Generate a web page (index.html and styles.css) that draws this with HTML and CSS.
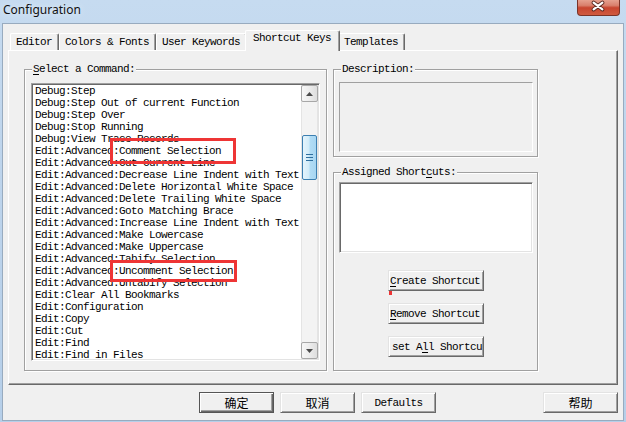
FILE: index.html
```html
<!DOCTYPE html>
<html lang="en">
<head>
  <meta charset="UTF-8">
  <title>Configuration</title>
  <link rel="stylesheet" href="styles.css">
</head>
<body>

  <div class="window">
    <div class="titlebar">
      <span class="title">Configuration</span>
      <div class="close">
        <svg width="43" height="17" viewBox="0 0 43 17">
          <path d="M17 4.5 L26 11.5 M26 4.5 L17 11.5" stroke="#5a2a22" stroke-width="4" stroke-linecap="round"/>
          <path d="M17 4.5 L26 11.5 M26 4.5 L17 11.5" stroke="#fff" stroke-width="2.2" stroke-linecap="round"/>
        </svg>
      </div>
    </div>

    <div class="client">
      <div class="tabs">
        <div class="tab">Editor</div>
        <div class="tab">Colors &amp; Fonts</div>
        <div class="tab">User Keywords</div>
        <div class="tab active">Shortcut Keys</div>
        <div class="tab">Templates</div>
      </div>

      <div class="panel">
        <div class="group cmd">
          <span class="group-title"><u>S</u>elect a Command:</span>
          <div class="listbox">
            <ul class="list">
              <li>Debug:Step</li>
              <li>Debug:Step Out of current Function</li>
              <li>Debug:Step Over</li>
              <li>Debug:Stop Running</li>
              <li>Debug:View Trace Records</li>
              <li>Edit:Advanced:Comment Selection</li>
              <li>Edit:Advanced:Cut Current Line</li>
              <li>Edit:Advanced:Decrease Line Indent with Text</li>
              <li>Edit:Advanced:Delete Horizontal White Space</li>
              <li>Edit:Advanced:Delete Trailing White Space</li>
              <li>Edit:Advanced:Goto Matching Brace</li>
              <li>Edit:Advanced:Increase Line Indent with Text</li>
              <li>Edit:Advanced:Make Lowercase</li>
              <li>Edit:Advanced:Make Uppercase</li>
              <li>Edit:Advanced:Tabify Selection</li>
              <li>Edit:Advanced:Uncomment Selection</li>
              <li>Edit:Advanced:Untabify Selection</li>
              <li>Edit:Clear All Bookmarks</li>
              <li>Edit:Configuration</li>
              <li>Edit:Copy</li>
              <li>Edit:Cut</li>
              <li>Edit:Find</li>
              <li>Edit:Find in Files</li>
            </ul>
            <div class="scrollbar">
              <div class="sb-btn">
                <svg width="7" height="4" viewBox="0 0 7 4"><path d="M0 4 L3.5 0 L7 4 Z" fill="#4a4a4a"/></svg>
              </div>
              <div class="track">
                <div class="thumb">
                  <svg width="7" height="7" viewBox="0 0 7 7">
                    <path d="M0 0.5 H7 M0 3.5 H7 M0 6.5 H7" stroke="#2f6f9f" stroke-width="1"/>
                  </svg>
                </div>
              </div>
              <div class="sb-btn">
                <svg width="7" height="4" viewBox="0 0 7 4"><path d="M0 0 L3.5 4 L7 0 Z" fill="#4a4a4a"/></svg>
              </div>
            </div>
          </div>
        </div>

        <div class="side">
          <div class="group desc">
            <span class="group-title">Description:</span>
            <div class="field"></div>
          </div>
          <div class="group keys">
            <span class="group-title">Assigned Short<u>c</u>uts:</span>
            <div class="field white"></div>
            <div class="key-buttons">
              <button class="btn wide"><u>C</u>reate Shortcut</button>
              <button class="btn wide"><u>R</u>emove Shortcut</button>
              <button class="btn wide clip">set A<u>l</u>l Shortcu</button>
            </div>
          </div>
        </div>
      </div>

      <div class="actions">
        <button class="btn dlg default zh">确定</button>
        <button class="btn dlg zh">取消</button>
        <button class="btn dlg">Defaults</button>
        <button class="btn dlg help zh">帮助</button>
      </div>
    </div>

    <!-- annotation marks drawn over the dialog -->
    <div class="mark mark-1"></div>
    <div class="mark mark-2"></div>
    <div class="mark dot"></div>
  </div>

</body>
</html>
```

FILE: styles.css
```css
body {
  margin: 0;
  font-family: "Liberation Mono", monospace;
  font-size: 11px;
  letter-spacing: -0.6px;
  color: #000;
}

.window {
  position: relative;
  width: 626px;
  height: 422px;
  overflow: hidden;
  background: linear-gradient(180deg, #c6dbf0 0%, #bdd4ec 40%, #b6cfe9 100%);
}

.titlebar {
  height: 23px;
  display: flex;
  justify-content: space-between;
  align-items: flex-start;
  padding-right: 6px;
}

.title {
  padding: 2px 0 0 3px;
  font: 12px/16px "Noto Sans", sans-serif;
  letter-spacing: 0;
  color: #111;
  text-shadow: 0 0 6px #eaf3fc;
}

.close {
  width: 43px;
  height: 17px;
  box-sizing: border-box;
  margin-top: -1px;
  border: 1px solid #7a3328;
  border-top: 0;
  border-radius: 0 0 4px 4px;
  background: linear-gradient(180deg, #e8a695 0%, #d9806d 40%, #c8452f 55%, #cf5a40 100%);
  display: flex;
}

.close svg {
  margin: -1px 0 0 -1px;
}

.client {
  height: 398px;
  margin: 0 2px;
  box-sizing: border-box;
  border: 1px solid #98abbf;
  background: #f0f0f0;
  padding: 7px 0 0 5px;
}

/* tabs */
.tabs {
  display: flex;
  align-items: flex-end;
  height: 19px;
  padding-left: 2px;
}

.tab {
  height: 17px;
  box-sizing: border-box;
  padding: 0 6px 0 5px;
  border: 1px solid;
  border-bottom: 0;
  border-color: #fff #696969 #fff #fff;
  border-radius: 2px 2px 0 0;
  box-shadow: inset -1px 0 #a0a0a0;
  background: #f0f0f0;
  line-height: 16px;
  white-space: nowrap;
}

.tab.active {
  position: relative;
  z-index: 1;
  height: 21px;
  margin: 0 -2px -1px;
  padding: 0 8px 0 7px;
  line-height: 15px;
}

.panel {
  width: 610px;
  height: 335px;
  box-sizing: border-box;
  border: 1px solid;
  border-color: #fff #696969 #696969 #fff;
  box-shadow: inset -1px -1px #a0a0a0;
  display: flex;
  gap: 6px;
  padding: 18px 0 0 15px;
}

/* group boxes */
.group {
  box-sizing: border-box;
  border: 1px solid #a0a0a0;
  box-shadow: 1px 1px #fff, inset 1px 1px #fff;
}

.group-title {
  display: block;
  width: fit-content;
  margin: -7px 0 0 7px;
  padding: 0 1px;
  background: #f0f0f0;
  line-height: 12px;
  white-space: nowrap;
}

.group-title u,
.btn u {
  text-underline-offset: 2px;
}

.cmd {
  width: 303px;
  height: 302px;
}

.listbox {
  width: 289px;
  height: 278px;
  margin: 8px 0 0 6px;
  box-sizing: border-box;
  border: 1px solid;
  border-color: #a0a0a0 #fff #fff #a0a0a0;
  padding: 1px;
  box-shadow: inset 1px 1px #696969, inset -1px -1px #e3e3e3;
  background: #fff;
  display: flex;
}

.list {
  flex: 1;
  margin: 0;
  padding: 0 0 0 2px;
  list-style: none;
  overflow: clip;
  overflow-clip-margin: 3px;
  line-height: 12px;
  white-space: nowrap;
}

.scrollbar {
  position: relative;
  width: 17px;
  display: flex;
  flex-direction: column;
  background: linear-gradient(90deg, #e4e4e4 0 1px, #f3f3f3 1px 16px, #e4e4e4 16px);
}

.sb-btn {
  height: 17px;
  box-sizing: border-box;
  border: 1px solid #a7a7a7;
  border-radius: 2px;
  background: linear-gradient(90deg, #f7f7f7, #ececec 50%, #dedede);
  display: flex;
  align-items: center;
  justify-content: center;
}

.track {
  flex: 1;
}

.thumb {
  margin: 33px 0 0 1px;
  width: 15px;
  height: 45px;
  box-sizing: border-box;
  border: 1px solid #3c7fb1;
  border-radius: 2px;
  background: linear-gradient(90deg, #e5f4fc 0%, #d2ecf9 45%, #b1dcf5 55%, #a7d6f2 100%);
  display: flex;
  align-items: center;
  justify-content: center;
}

/* right column */
.side {
  width: 205px;
  display: flex;
  flex-direction: column;
}

.desc {
  height: 88px;
}

.keys {
  height: 199px;
  margin-top: 15px;
}

.field {
  width: 194px;
  height: 70px;
  margin: 7px 0 0 5px;
  box-sizing: border-box;
  border: 1px solid;
  border-color: #a0a0a0 #fff #fff #a0a0a0;
}

.field.white {
  height: 71px;
  margin-top: 4px;
  background: #fff;
  box-shadow: inset 1px 1px #696969, inset -1px -1px #e3e3e3;
}

.key-buttons {
  display: flex;
  flex-direction: column;
  gap: 12px;
  margin-top: 17px;
  padding-left: 54px;
}

/* buttons */
.btn {
  height: 21px;
  box-sizing: border-box;
  padding: 0;
  border: 1px solid;
  border-color: #e3e3e3 #696969 #696969 #e3e3e3;
  box-shadow: inset 1px 1px #fff, inset -1px -1px #a0a0a0;
  background: #f0f0f0;
  font: inherit;
  letter-spacing: inherit;
  color: #000;
  line-height: 18px;
  white-space: nowrap;
  overflow: hidden;
}

.btn.wide {
  width: 96px;
  text-align: left;
  padding-left: 1px;
}

.btn.clip {
  padding-left: 3px;
}

.actions {
  width: 610px;
  box-sizing: border-box;
  display: flex;
  gap: 6px;
  padding: 7px 0 0 191px;
}

.btn.dlg {
  width: 75px;
}

.btn.default {
  border-color: #555;
  box-shadow: inset 1px 1px #fff, inset -1px -1px #696969, inset -2px -2px #a0a0a0;
}

.btn.help {
  margin-left: auto;
}

.zh {
  font-family: "Noto Sans CJK SC", sans-serif;
  font-size: 12px;
  letter-spacing: 0;
}

/* red annotation boxes */
.mark {
  position: absolute;
  box-sizing: border-box;
  border: 3px solid #ee3535;
}

.mark-1 {
  left: 110px;
  top: 138px;
  width: 126px;
  height: 26px;
}

.mark-2 {
  left: 110px;
  top: 260px;
  width: 127px;
  height: 22px;
}

.dot {
  left: 389px;
  top: 291px;
  width: 3px;
  height: 4px;
  border: 0;
  background: #ee3535;
}
```
